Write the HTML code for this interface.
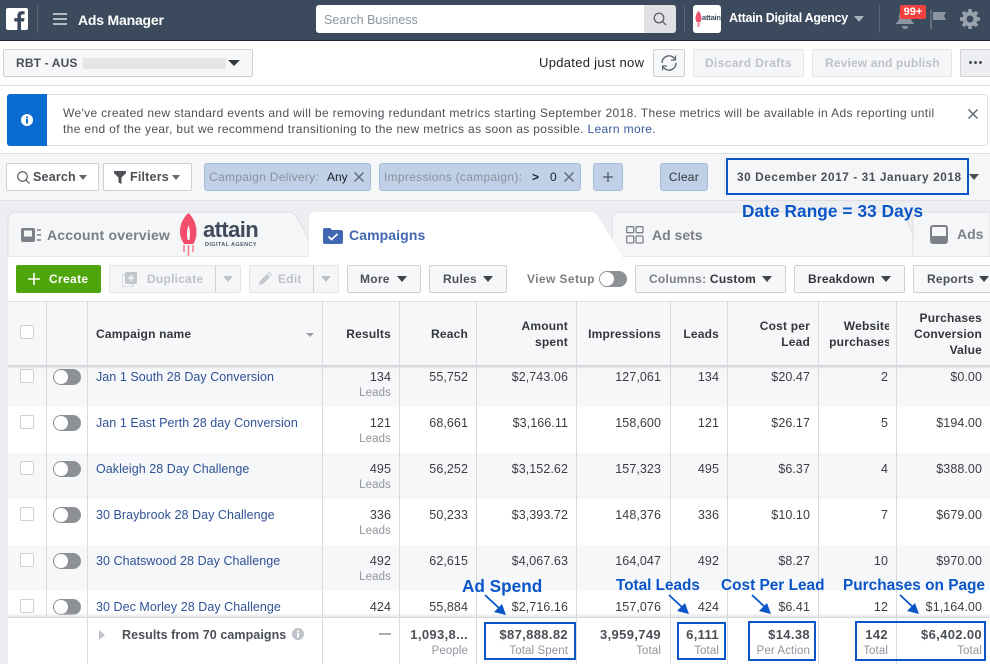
<!DOCTYPE html>
<html><head><meta charset="utf-8"><style>
html,body{margin:0;padding:0}
body{width:990px;height:664px;position:relative;overflow:hidden;background:#fff;font-family:"Liberation Sans",sans-serif;font-size:12.5px;color:#1d2129}
.a{position:absolute;white-space:nowrap}
.btn{position:absolute;box-sizing:border-box;background:#f6f7f9;border:1px solid #ced0d4;border-radius:2px;font-weight:bold;font-size:12px;letter-spacing:.25px;color:#4b4f56;line-height:26px;white-space:nowrap}
.dis{color:#bec2c9;background:#f5f6f7;border-color:#e3e5e8}
.tri{position:absolute;width:0;height:0;border-left:6px solid transparent;border-right:6px solid transparent;border-top:6px solid #3f434b}
.tag{position:absolute;box-sizing:border-box;background:#c0d0e6;border:1px solid #a6bcdc;border-radius:3px;height:28px;line-height:26px;color:#8b929c;font-size:12px;letter-spacing:.3px;white-space:nowrap}
.vl{position:absolute;width:1px;background:#d8dadd}
.row{position:absolute;left:8px;right:0}
.g{background:#f6f7f9}
.n{position:absolute;left:88px;top:9px;color:#2f5296;white-space:nowrap;line-height:15px;letter-spacing:.05px}
.v{position:absolute;top:9px;line-height:15px;letter-spacing:.08px;color:#3a3d42;text-align:right;white-space:nowrap}
.l{position:absolute;top:25px;line-height:15px;font-size:11.5px;letter-spacing:.1px;color:#90949c;text-align:right}
.c1{right:599px}.c2{right:522px}.c3{right:422px}.c4{right:329px}.c5{right:271px}.c6{right:180px}.c7{right:102px}.c8{right:8px}
.cb{position:absolute;left:12px;top:8px;width:12px;height:12px;border:1px solid #ced0d4;border-radius:2px;background:#fff}
.tg{position:absolute;left:45px;top:8px;width:28px;height:16px;border-radius:8px;background:#8d9095}
.tg:after{content:"";position:absolute;left:1px;top:1px;width:14px;height:14px;border-radius:50%;background:#fff}
.h{position:absolute;font-weight:bold;font-size:12px;letter-spacing:.2px;line-height:16px;color:#33363b;text-align:right;white-space:nowrap}
.f1{position:absolute;top:627px;font-weight:bold;font-size:13px;letter-spacing:.35px;color:#4b4f56;line-height:16px;white-space:nowrap}
.f2{position:absolute;top:643px;font-size:11.5px;letter-spacing:.1px;color:#90949c;line-height:16px;white-space:nowrap}
.box{position:absolute;box-sizing:border-box;border:2px solid #0a55c8}
.an{position:absolute;font-weight:bold;font-size:17.2px;color:#0a55c8;line-height:20px;white-space:nowrap}
</style></head><body>

<!-- top bar -->
<div class="a" style="left:0;top:0;width:990px;height:40px;background:#3b4a5c;border-bottom:1px solid #1f2a38"></div>
<svg class="a" style="left:6px;top:8px" width="22" height="22" viewBox="0 0 22 22"><rect width="22" height="22" rx="2" fill="#fff"/><path d="M15 22v-8.500h3l.5-3.400H15V8c0-1 .4-1.600 1.700-1.600h1.900V3.300c-.4 0-1.500-.2-2.700-.2-2.700 0-4.500 1.600-4.500 4.500v2.500H8.300v3.400h3.100V22z" fill="#3b4a5c"/></svg>
<div class="a" style="left:37px;top:5px;width:1px;height:28px;background:#5a6778"></div>
<svg class="a" style="left:53px;top:13px" width="14" height="12"><path d="M0 1h14M0 6h14M0 11h14" stroke="#fff" stroke-width="1.300"/></svg>
<div class="a" style="left:78px;top:11px;color:#fff;font-size:14px;line-height:18px;font-weight:bold;letter-spacing:-.2px">Ads Manager</div>
<div class="a" style="left:316px;top:5px;width:329px;height:28px;background:#fff;border-radius:3px 0 0 3px"></div>
<div class="a" style="left:324px;top:12px;color:#8d949e;font-size:12.500px;line-height:16px">Search Business</div>
<div class="a" style="left:644px;top:5px;width:32px;height:28px;background:#dfe1e4;border-radius:0 3px 3px 0"></div>
<svg class="a" style="left:653px;top:12px" width="14" height="14" fill="none" stroke="#555" stroke-width="1.200"><circle cx="6" cy="6" r="4.800"/><path d="M9.500 9.500L13 13"/></svg>
<div class="a" style="left:684px;top:5px;width:1px;height:28px;background:#5a6778"></div>
<div class="a" style="left:693px;top:5px;width:28px;height:28px;background:#fff;border-radius:3px"></div>
<svg class="a" style="left:694px;top:11px" width="10" height="17"><path d="M4.500 0c2 2 3 5 3 8l-1 3h-4l-1-3c0-3 1-6 3-8z" fill="#e8506b"/><rect x="3.500" y="11" width="2" height="5" fill="#f08a98"/></svg>
<div class="a" style="left:702px;top:13px;font-size:7.500px;font-weight:bold;line-height:10px;letter-spacing:-.2px;color:#3f4a5c">attain</div>
<div class="a" style="left:729px;top:10px;color:#fff;font-weight:bold;font-size:12.500px;line-height:16px;letter-spacing:-.3px">Attain Digital Agency</div>
<div class="tri" style="left:854px;top:16px;border-top-color:#a9b1bc;border-left-width:5px;border-right-width:5px"></div>
<div class="a" style="left:879px;top:5px;width:1px;height:28px;background:#5a6778"></div>
<svg class="a" style="left:895px;top:8px" width="20" height="22"><path d="M10 2c4 0 6 3 6 7 0 3 1 5 3 6v1H1v-1c2-1 3-3 3-6 0-4 2-7 6-7z" fill="#8b95a2"/><path d="M7 18h6c0 2-1 3-3 3s-3-1-3-3z" fill="#8b95a2"/></svg>
<div class="a" style="left:900px;top:5px;width:26px;height:14px;background:#f0433f;border-radius:2px;color:#fff;font-weight:bold;font-size:11px;line-height:14px;text-align:center">99+</div>
<svg class="a" style="left:930px;top:10px" width="18" height="20"><path d="M1 0v19" stroke="#8b95a2" stroke-width="1"/><path d="M3 2h13l-2 4 2 4H3z" fill="#8b95a2"/><path d="M1 5h2M1 10h2" stroke="#3b4a5c"/></svg>
<svg class="a" style="left:960px;top:9px" width="20" height="20" viewBox="0 0 20 20"><circle cx="10" cy="10" r="5.500" fill="none" stroke="#9aa3ae" stroke-width="4"/><path d="M10 0v4M10 16v4M0 10h4M16 10h4M3 3l3 3M14 14l3 3M3 17l3-3M14 6l3-3" stroke="#9aa3ae" stroke-width="3.500"/></svg>

<!-- subheader -->
<div class="btn" style="left:3px;top:49px;width:250px;height:28px;font-size:12px;letter-spacing:.15px;padding-left:12px;color:#4b4f56">RBT - AUS</div>
<div class="a" style="left:83px;top:58px;width:143px;height:11px;background:#e4e5e7"></div>
<div class="tri" style="left:228px;top:60px;border-top-color:#33363b"></div>
<div class="a" style="left:539px;top:55px;font-size:13px;line-height:16px;letter-spacing:.3px;color:#1d2129">Updated just now</div>
<div class="btn" style="left:653px;top:49px;width:32px;height:28px"></div>
<svg class="a" style="left:660px;top:54px" width="18" height="18" fill="none" stroke="#606770" stroke-width="1.500"><path d="M2 9a7 7 0 0 1 12-5l1.500 1.500M16 9a7 7 0 0 1-12 5l-1.500-1.500"/><path d="M15.500 1.500v4.500h-4.500M2.500 16.500v-4.500H7" stroke-width="1.200"/></svg>
<div class="btn dis" style="left:693px;top:49px;width:111px;height:28px;padding-left:11px;letter-spacing:.35px">Discard Drafts</div>
<div class="btn dis" style="left:812px;top:49px;width:140px;height:28px;padding-left:12px;letter-spacing:.15px">Review and publish</div>
<div class="btn" style="left:960px;top:49px;width:40px;height:28px;background:#eceef1"></div>
<div class="a" style="left:969px;top:61px;width:3px;height:3px;border-radius:50%;background:#4b4f56;box-shadow:5px 0 #4b4f56,10px 0 #4b4f56"></div>
<div class="a" style="left:0;top:85px;width:990px;height:1px;background:#dddfe2"></div>

<!-- banner -->
<div class="a" style="left:7px;top:94px;width:981px;height:52px;box-sizing:border-box;border:1px solid #dddfe2;border-radius:3px;background:#fff"></div>
<div class="a" style="left:7px;top:94px;width:40px;height:52px;background:#0a6bd0;border-radius:3px 0 0 3px"></div>
<svg class="a" style="left:21px;top:114px" width="12" height="12"><circle cx="6" cy="6" r="6" fill="#fff"/><rect x="5" y="5" width="2" height="4.500" fill="#0a6bd0"/><rect x="5" y="2.500" width="2" height="1.800" fill="#0a6bd0"/></svg>
<div class="a" style="left:63px;top:105px;font-size:12px;line-height:16px;letter-spacing:.35px;color:#4b4f56">We've created new standard events and will be removing redundant metrics starting September 2018. These metrics will be available in Ads reporting until<br>the end of the year, but we recommend transitioning to the new metrics as soon as possible. <span style="color:#365899">Learn more.</span></div>
<svg class="a" style="left:968px;top:109px" width="10" height="10"><path d="M.5.500l9 9M9.500.500l-9 9" stroke="#606770" stroke-width="1.500"/></svg>

<!-- filter band -->
<div class="a" style="left:0;top:153px;width:990px;height:511px;background:#f5f6f7;border-top:1px solid #dddfe2;box-sizing:border-box"></div>
<div class="btn" style="left:6px;top:163px;width:93px;height:28px;background:#fff;padding-left:26px;font-size:12.500px;letter-spacing:.2px">Search</div>
<svg class="a" style="left:17px;top:171px" width="13" height="13" fill="none" stroke="#4b4f56" stroke-width="1.100"><circle cx="5.500" cy="5.500" r="4.800"/><path d="M9 9l3.500 3.500"/></svg>
<div class="tri" style="left:79px;top:175px;border-left-width:4px;border-right-width:4px;border-top-width:5px;border-top-color:#606770"></div>
<div class="btn" style="left:103px;top:163px;width:89px;height:28px;background:#fff;padding-left:26px;font-size:12.500px;letter-spacing:.2px">Filters</div>
<svg class="a" style="left:114px;top:171px" width="12" height="13"><path d="M0 0h12v2L7.500 6.500V13l-3-1.500V6.500L0 2z" fill="#4b4f56"/></svg>
<div class="tri" style="left:172px;top:175px;border-left-width:4px;border-right-width:4px;border-top-width:5px;border-top-color:#606770"></div>
<div class="tag" style="left:204px;top:163px;width:167px;padding-left:4px">Campaign Delivery:</div>
<div class="a" style="left:327px;top:164px;font-size:12px;line-height:26px;color:#1d2129">Any</div>
<svg class="a" style="left:354px;top:172px" width="10" height="10"><path d="M.5.500l9 9M9.500.500l-9 9" stroke="#606770" stroke-width="1.300"/></svg>
<div class="tag" style="left:379px;top:163px;width:202px;padding-left:4px">Impressions (campaign):</div>
<div class="a" style="left:532px;top:164px;font-size:12px;font-weight:bold;line-height:26px;color:#1d2129">&gt;</div>
<div class="a" style="left:550px;top:164px;font-size:12px;line-height:26px;color:#1d2129">0</div>
<svg class="a" style="left:564px;top:172px" width="10" height="10"><path d="M.5.500l9 9M9.500.500l-9 9" stroke="#606770" stroke-width="1.300"/></svg>
<div class="tag" style="left:593px;top:163px;width:30px"></div>
<svg class="a" style="left:603px;top:172px" width="10" height="10"><path d="M5 0v10M0 5h10" stroke="#606770" stroke-width="1.500"/></svg>
<div class="tag" style="left:660px;top:163px;width:48px;text-align:center;color:#33363b;font-size:12px;letter-spacing:.3px">Clear</div>
<div class="a" style="left:724px;top:159px;width:266px;height:36px;border-left:1px solid #dddfe2;box-sizing:border-box"></div>
<div class="a" style="left:737px;top:169px;font-weight:bold;font-size:11.800px;line-height:16px;letter-spacing:.59px;color:#4b4f56">30 December 2017 - 31 January 2018</div>
<div class="tri" style="left:969px;top:174px;border-left-width:5px;border-right-width:5px;border-top-color:#4b4f56"></div>
<div class="a" style="left:0;top:200px;width:990px;height:1px;background:#dddfe2"></div>
<div class="a" style="left:0;top:201px;width:990px;height:463px;background:#eceef1"></div>

<!-- tabs -->
<svg class="a" style="left:0;top:205px" width="990" height="54">
<path d="M8 53V15q0-8 8-8H290q4 0 7 5l12 23V53z" fill="#f5f6f7" stroke="#dddfe2"/>
<path d="M612 53V15q0-8 8-8H898q4 0 7 5l20 41z" fill="#f5f6f7" stroke="#dddfe2"/>
<path d="M913 53V15q0-8 8-8H990V53z" fill="#f5f6f7" stroke="#dddfe2"/>
<path d="M8 52H990" stroke="#dddfe2"/>
<path d="M309 53V15q0-8 8-8H592q4 0 6 4l25 42z" fill="#fff"/>
</svg>
<div class="a" style="left:8px;top:257px;width:982px;height:407px;background:#fff"></div>
<svg class="a" style="left:21px;top:228px" width="20" height="15"><rect width="14" height="14" rx="2" fill="#7d8187"/><rect x="3" y="2.500" width="8" height="6" fill="#f5f6f7"/><path d="M16 2h4M16 7h4M16 12h4" stroke="#7d8187" stroke-width="1.600"/></svg>
<div class="a" style="left:47px;top:226px;font-weight:bold;font-size:14px;line-height:18px;color:#7a7e85;letter-spacing:.2px">Account overview</div>
<svg class="a" style="left:178px;top:211px" width="22" height="47"><path d="M10.500 2c5 5 8 11 8 19 0 6-2 10-3 12H6c-1-2-4-6-4-12 0-8 3-14 8.500-19z" fill="#f24d6b"/><path d="M10.500 14c1 3 1.500 6 1.500 9s-.3 5-.7 6H9.700c-.4-1-.7-3-.7-6s.5-6 1.500-9z" fill="#f5f6f7"/><path d="M6 34v7M10.500 34v11M15 34v7" stroke="#f6768b" stroke-width="1.500"/></svg>
<div class="a" style="left:203px;top:218px;font-weight:bold;font-size:22px;line-height:24px;letter-spacing:-.6px;color:#3f4a5c">attain</div>
<div class="a" style="left:205px;top:241px;font-size:5.500px;line-height:8px;font-weight:bold;letter-spacing:.4px;color:#4f596a">DIGITAL AGENCY</div>
<svg class="a" style="left:323px;top:227px" width="20" height="17"><path d="M0 3q0-2 2-2h5l2 2h9q2 0 2 2v10q0 2-2 2H2q-2 0-2-2z" fill="#4267b2"/><path d="M5.500 9.500l3 3 6-5.500" fill="none" stroke="#fff" stroke-width="1.800"/></svg>
<div class="a" style="left:349px;top:226px;font-weight:bold;font-size:14px;line-height:18px;color:#4267b2;letter-spacing:.1px">Campaigns</div>
<svg class="a" style="left:626px;top:226px" width="18" height="18" fill="none" stroke="#7d8187" stroke-width="1.300"><rect x=".7" y=".7" width="7" height="6" rx="1"/><rect x="10" y=".7" width="7" height="6" rx="1"/><rect x=".7" y="10" width="7" height="7" rx="1"/><rect x="10" y="10" width="7" height="7" rx="1"/></svg>
<div class="a" style="left:652px;top:226px;font-weight:bold;font-size:14px;line-height:18px;color:#7a7e85">Ad sets</div>
<svg class="a" style="left:930px;top:225px" width="18" height="19"><rect x="1" y="1" width="16" height="17" rx="2" fill="none" stroke="#7d8187" stroke-width="2"/><rect x="2" y="11" width="14" height="6" fill="#7d8187"/></svg>
<div class="a" style="left:957px;top:225px;font-weight:bold;font-size:14px;line-height:18px;color:#7a7e85">Ads</div>

<!-- toolbar -->
<div class="btn" style="left:16px;top:265px;width:85px;height:28px;background:#4ea50c;border:none;color:#fff;padding-left:33px;line-height:28px;letter-spacing:.35px">Create</div>
<svg class="a" style="left:28px;top:273px" width="12" height="12"><path d="M6 0v12M0 6h12" stroke="#fff" stroke-width="1.600"/></svg>
<div class="btn dis" style="left:109px;top:265px;width:132px;height:28px;padding-left:37px">Duplicate</div>
<div class="a" style="left:215px;top:265px;width:1px;height:28px;background:#ced0d4"></div>
<svg class="a" style="left:122px;top:272px" width="15" height="15"><rect x="3" width="12" height="12" rx="1.500" fill="#c4c7cc"/><rect y="3" width="11" height="12" rx="1.500" fill="none" stroke="#c4c7cc"/><path d="M9 3v6M6 6h6" stroke="#f5f6f7" stroke-width="1.500"/></svg>
<div class="tri" style="left:223px;top:276px;border-left-width:5px;border-right-width:5px;border-top-color:#bec2c9"></div>
<div class="btn dis" style="left:249px;top:265px;width:90px;height:28px;padding-left:28px">Edit</div>
<div class="a" style="left:313px;top:265px;width:1px;height:28px;background:#ced0d4"></div>
<svg class="a" style="left:259px;top:272px" width="13" height="13"><path d="M0 13l1-4 7-7 3 3-7 7zM9 1l1-1 3 3-1 1z" fill="#c4c7cc"/></svg>
<div class="tri" style="left:321px;top:276px;border-left-width:5px;border-right-width:5px;border-top-color:#bec2c9"></div>
<div class="btn" style="left:347px;top:265px;width:74px;height:28px;padding-left:12px">More</div>
<div class="tri" style="left:397px;top:276px;border-left-width:5px;border-right-width:5px"></div>
<div class="btn" style="left:429px;top:265px;width:78px;height:28px;padding-left:13px">Rules</div>
<div class="tri" style="left:483px;top:276px;border-left-width:5px;border-right-width:5px"></div>
<div class="a" style="left:527px;top:271px;font-weight:bold;font-size:12px;line-height:16px;color:#7a7e85;letter-spacing:.4px">View Setup</div>
<div class="a" style="left:599px;top:271px;width:28px;height:16px;border-radius:8px;background:#8d9095"></div>
<div class="a" style="left:600px;top:272px;width:14px;height:14px;border-radius:50%;background:#fff"></div>
<div class="btn" style="left:635px;top:265px;width:151px;height:28px;padding-left:13px;color:#7a7e85">Columns: <span style="color:#33363b">Custom</span></div>
<div class="tri" style="left:762px;top:276px;border-left-width:5px;border-right-width:5px"></div>
<div class="btn" style="left:794px;top:265px;width:111px;height:28px;padding-left:13px;color:#33363b">Breakdown</div>
<div class="tri" style="left:881px;top:276px;border-left-width:5px;border-right-width:5px"></div>
<div class="btn" style="left:913px;top:265px;width:90px;height:28px;padding-left:13px">Reports</div>
<div class="tri" style="left:979px;top:276px;border-left-width:5px;border-right-width:5px"></div>

<!-- rows -->
<div class="row g" style="top:361px;height:46px"><div class="cb"></div><div class="tg"></div><div class="n">Jan 1 South 28 Day Conversion</div>
<div class="v c1">134</div><div class="l c1">Leads</div><div class="v c2">55,752</div><div class="v c3">$2,743.06</div><div class="v c4">127,061</div><div class="v c5">134</div><div class="v c6">$20.47</div><div class="v c7">2</div><div class="v c8">$0.00</div></div>
<div class="row" style="top:407px;height:46px"><div class="cb"></div><div class="tg"></div><div class="n">Jan 1 East Perth 28 day Conversion</div>
<div class="v c1">121</div><div class="l c1">Leads</div><div class="v c2">68,661</div><div class="v c3">$3,166.11</div><div class="v c4">158,600</div><div class="v c5">121</div><div class="v c6">$26.17</div><div class="v c7">5</div><div class="v c8">$194.00</div></div>
<div class="row g" style="top:453px;height:46px"><div class="cb"></div><div class="tg"></div><div class="n">Oakleigh 28 Day Challenge</div>
<div class="v c1">495</div><div class="l c1">Leads</div><div class="v c2">56,252</div><div class="v c3">$3,152.62</div><div class="v c4">157,323</div><div class="v c5">495</div><div class="v c6">$6.37</div><div class="v c7">4</div><div class="v c8">$388.00</div></div>
<div class="row" style="top:499px;height:46px"><div class="cb"></div><div class="tg"></div><div class="n">30 Braybrook 28 Day Challenge</div>
<div class="v c1">336</div><div class="l c1">Leads</div><div class="v c2">50,233</div><div class="v c3">$3,393.72</div><div class="v c4">148,376</div><div class="v c5">336</div><div class="v c6">$10.10</div><div class="v c7">7</div><div class="v c8">$679.00</div></div>
<div class="row g" style="top:545px;height:46px"><div class="cb"></div><div class="tg"></div><div class="n">30 Chatswood 28 Day Challenge</div>
<div class="v c1">492</div><div class="l c1">Leads</div><div class="v c2">62,615</div><div class="v c3">$4,067.63</div><div class="v c4">164,047</div><div class="v c5">492</div><div class="v c6">$8.27</div><div class="v c7">10</div><div class="v c8">$970.00</div></div>
<div class="row" style="top:591px;height:26px"><div class="cb"></div><div class="tg"></div><div class="n">30 Dec Morley 28 Day Challenge</div>
<div class="v c1">424</div><div class="v c2">55,884</div><div class="v c3">$2,716.16</div><div class="v c4">157,076</div><div class="v c5">424</div><div class="v c6">$6.41</div><div class="v c7">12</div><div class="v c8">$1,164.00</div></div>

<!-- table header -->
<div class="a" style="left:8px;top:301px;width:982px;height:64px;background:#f6f7f9;border-top:1px solid #dddfe2;box-sizing:border-box"></div>
<div class="a" style="left:8px;top:365px;width:982px;height:4px;background:linear-gradient(rgba(200,202,206,.9),rgba(246,247,249,0))"></div>

<!-- footer -->
<div class="a" style="left:8px;top:617px;width:982px;height:47px;background:#fff;border-top:1px solid #d5d7da;box-sizing:border-box"></div>
<div class="a" style="left:8px;top:613px;width:982px;height:4px;background:linear-gradient(rgba(240,241,243,0),#e6e7ea)"></div>

<!-- column lines -->
<div class="vl" style="left:46px;top:301px;height:316px"></div>
<div class="vl" style="left:87px;top:301px;height:363px"></div>
<div class="vl" style="left:322px;top:301px;height:363px"></div>
<div class="vl" style="left:399px;top:301px;height:363px"></div>
<div class="vl" style="left:476px;top:301px;height:363px"></div>
<div class="vl" style="left:576px;top:301px;height:363px"></div>
<div class="vl" style="left:670px;top:301px;height:363px"></div>
<div class="vl" style="left:727px;top:301px;height:363px"></div>
<div class="vl" style="left:818px;top:301px;height:363px"></div>
<div class="vl" style="left:896px;top:301px;height:363px"></div>

<!-- header text -->
<div class="a" style="left:20px;top:325px;width:12px;height:12px;border:1px solid #ced0d4;border-radius:2px;background:#fff"></div>
<div class="h" style="left:96px;top:326px">Campaign name</div>
<div class="a" style="left:306px;top:333px;border-left:4px solid transparent;border-right:4px solid transparent;border-top:4px solid #9a9da3"></div>
<div class="h" style="right:599px;top:326px">Results</div>
<div class="h" style="right:522px;top:326px">Reach</div>
<div class="h" style="right:422px;top:318px">Amount<br>spent</div>
<div class="h" style="right:329px;top:326px">Impressions</div>
<div class="h" style="right:271px;top:326px">Leads</div>
<div class="h" style="right:180px;top:318px">Cost per<br>Lead</div>
<div class="a" style="left:819px;top:318px;width:70px;height:32px;overflow:hidden"><div class="h" style="right:-2px;top:0">Website<br>purchases</div></div>
<div class="h" style="right:8px;top:310px">Purchases<br>Conversion<br>Value</div>

<!-- footer text -->
<svg class="a" style="left:99px;top:630px" width="6" height="10"><path d="M0 0l6 5-6 5z" fill="#bec2c9"/></svg>
<div class="f1" style="left:122px;font-size:12.500px;letter-spacing:.07px">Results from 70 campaigns</div>
<svg class="a" style="left:292px;top:628px" width="12" height="12"><circle cx="6" cy="6" r="6" fill="#bec2c9"/><rect x="5" y="5" width="2" height="4.500" fill="#fff"/><rect x="5" y="2.500" width="2" height="1.800" fill="#fff"/></svg>
<div class="a" style="left:379px;top:633px;width:12px;height:2px;background:#a9adb3"></div>
<div class="f1" style="right:522px">1,093,8...</div><div class="f2" style="right:522px">People</div>
<div class="f1" style="right:422px">$87,888.82</div><div class="f2" style="right:422px">Total Spent</div>
<div class="f1" style="right:329px">3,959,749</div><div class="f2" style="right:329px">Total</div>
<div class="f1" style="right:271px">6,111</div><div class="f2" style="right:271px">Total</div>
<div class="f1" style="right:180px">$14.38</div><div class="f2" style="right:180px">Per Action</div>
<div class="f1" style="right:102px">142</div><div class="f2" style="right:102px">Total</div>
<div class="f1" style="right:8px">$6,402.00</div><div class="f2" style="right:8px">Total</div>

<!-- annotations -->
<div class="box" style="left:726px;top:158px;width:243px;height:37px"></div>
<div class="an" style="left:742px;top:201px;letter-spacing:.1px">Date Range = 33 Days</div>
<div class="an" style="left:462px;top:576px">Ad Spend</div>
<div class="an" style="left:616px;top:576px;font-size:15.300px">Total Leads</div>
<div class="an" style="left:721px;top:576px;font-size:15.400px">Cost Per Lead</div>
<div class="an" style="left:843px;top:576px;font-size:15.400px">Purchases on Page</div>
<div class="box" style="left:484px;top:622px;width:92px;height:38px"></div>
<div class="box" style="left:677px;top:622px;width:49px;height:38px"></div>
<div class="box" style="left:748px;top:621px;width:68px;height:40px"></div>
<div class="box" style="left:855px;top:621px;width:131px;height:40px"></div>
<svg class="a" style="left:0;top:590px" width="990" height="30" fill="#0a55c8" stroke="#0a55c8">
<path d="M485 5L500 19" stroke-width="1.800"/><path d="M506 25l-12-3 8-8z" stroke="none"/>
<path d="M669 5L684 19" stroke-width="1.800"/><path d="M689 24l-12-3 8-8z" stroke="none"/>
<path d="M752 5L767 19" stroke-width="1.800"/><path d="M771 24l-12-3 8-8z" stroke="none"/>
<path d="M900 5L915 19" stroke-width="1.800"/><path d="M919 24l-12-3 8-8z" stroke="none"/>
</svg>
</body></html>
